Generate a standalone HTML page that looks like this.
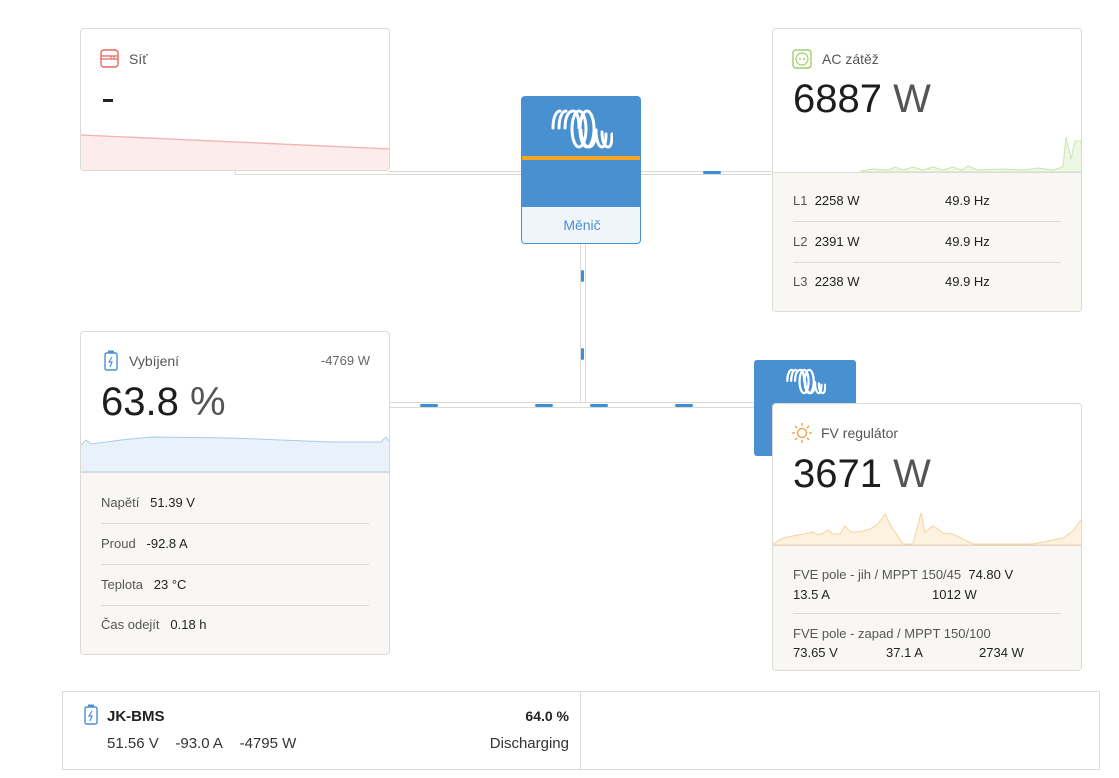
<!DOCTYPE html>
<html><head><meta charset="utf-8"><style>
*{box-sizing:border-box;margin:0;padding:0}
body{width:1119px;height:778px;background:#fff;font-family:"Liberation Sans",sans-serif;color:#222;position:relative;overflow:hidden}
.a{position:absolute}
.card{position:absolute;border:1px solid #dcdad4;border-radius:4px;background:#fff;overflow:hidden}
.beige{position:absolute;left:0;right:0;bottom:0;background:#f8f7f3;border-top:1px solid #dcdad4}
.t{font-size:14px;color:#555}
.big{font-size:40px;color:#1d1d1d}
.big span{color:#555}
.row{position:absolute;left:20px;right:20px;font-size:13px;color:#555}
.row b{font-weight:normal;color:#222}
.line{position:absolute;background:#fff;border:1px solid #dcdad4}
.blue{position:absolute;background:#3a8fd6;border-radius:2px}
</style></head><body>

<div class="line" style="left:235px;top:169px;width:540px;height:6px;border-top:none"></div>
<div class="line" style="left:389px;top:169px;width:383px;height:3px;border:none;border-bottom:1px solid #dcdad4"></div>
<div class="line" style="left:580px;top:243px;width:6px;height:164px;border-left:1px solid #dcdad4;border-right:1px solid #dcdad4;border-top:none;border-bottom:none"></div>
<div class="line" style="left:389px;top:402px;width:384px;height:6px"></div>
<div class="blue" style="left:703px;top:171px;width:18px;height:3px"></div>
<div class="blue" style="left:581px;top:270px;width:3px;height:12px"></div>
<div class="blue" style="left:581px;top:348px;width:3px;height:12px"></div>
<div class="blue" style="left:420px;top:404px;width:18px;height:3px"></div>
<div class="blue" style="left:535px;top:404px;width:18px;height:3px"></div>
<div class="blue" style="left:590px;top:404px;width:18px;height:3px"></div>
<div class="blue" style="left:675px;top:404px;width:18px;height:3px"></div>

<!-- Síť -->
<div class="card" style="left:80px;top:28px;width:310px;height:143px">
 <svg class="a" style="left:19px;top:20px" width="19" height="19" viewBox="0 0 19 19"><rect x="1" y="1" width="17" height="17" rx="3" fill="none" stroke="#e9665a" stroke-width="1.4"/><line x1="1" y1="7" x2="18" y2="7" stroke="#e9665a" stroke-width="1.2"/><line x1="1" y1="10" x2="18" y2="10" stroke="#e9665a" stroke-width="1.2"/><line x1="11" y1="7" x2="11" y2="10" stroke="#e9665a"/><line x1="14" y1="7" x2="14" y2="10" stroke="#e9665a"/></svg>
 <div class="a t" style="left:48px;top:22px">Síť</div>
 <div class="a" style="left:22px;top:70px;width:10px;height:3px;background:#222"></div>
 <svg class="a" style="left:0;top:100px" width="310" height="43"><polygon points="0,6 310,20 310,43 0,43" fill="#fcecec"/><polyline points="0,6 310,20" stroke="#f5b0b0" fill="none" stroke-width="1.3"/></svg>
</div>

<!-- Měnič -->
<div class="a" style="left:521px;top:96px;width:120px;height:148px;border:1px solid #4a90d2;border-radius:4px;overflow:hidden;background:#4890d0">
 <svg class="a" style="left:29px;top:11px" width="62" height="42" viewBox="0 0 62 42"><g fill="none" stroke="#fff" stroke-width="3" stroke-linecap="round"><path d="M2 20 C2 8 6 3 9 3"/><path d="M8 20 C8 8 12 3 15 3"/><path d="M14 20 C14 8 18 3 22 3 C26 3 28 10 28 20"/><ellipse cx="28" cy="21" rx="7" ry="18"/><ellipse cx="36" cy="21" rx="7" ry="18"/><path d="M30 22 C30 32 34 39 38 39 C42 39 45 32 45 22"/><path d="M45 22 C45 33 48 39 51 39 C54 39 55 33 55 26"/><path d="M51 24 C51 34 54 39 57 39 C60 39 61 34 61 26"/></g></svg>
 <div class="a" style="left:0;top:59px;width:120px;height:4px;background:#f7a520"></div>
 <div class="a" style="left:0;top:110px;width:120px;height:38px;background:#f0f5fa;color:#4a90d2;font-size:14px;text-align:center;line-height:36px">Měnič</div>
</div>

<!-- AC zátěž -->
<div class="card" style="left:772px;top:28px;width:310px;height:284px">
 <svg class="a" style="left:19px;top:20px" width="20" height="20"><rect x="1" y="1" width="18" height="18" rx="3" fill="none" stroke="#9bcf6c" stroke-width="1.4"/><circle cx="10" cy="10" r="6" fill="none" stroke="#9bcf6c" stroke-width="1.2"/><circle cx="8" cy="10" r="1" fill="#9bcf6c"/><circle cx="12" cy="10" r="1" fill="#9bcf6c"/></svg>
 <div class="a t" style="left:49px;top:22px">AC zátěž</div>
 <div class="a big" style="left:20px;top:48px">6887 <span>W</span></div>
 <svg class="a" style="left:0;top:100px" width="310" height="43"><polygon points="88,43 88,42 100,40 115,41 122,38 130,41 140,38 150,41 160,38 170,41 180,38 188,41 195,37 205,41 230,40 250,41 265,39 280,41 290,38 293,8 298,30 302,12 308,12 310,43" fill="#eef7e6" stroke="#c9e6ae" stroke-width="1"/></svg>
 <div class="beige" style="top:143px">
  <div class="row" style="top:20px">L1&nbsp; <b>2258 W</b><b class="a" style="left:152px">49.9 Hz</b></div>
  <div class="a" style="left:20px;right:20px;top:48px;border-top:1px solid #dcdad4"></div>
  <div class="row" style="top:61px">L2&nbsp; <b>2391 W</b><b class="a" style="left:152px">49.9 Hz</b></div>
  <div class="a" style="left:20px;right:20px;top:89px;border-top:1px solid #dcdad4"></div>
  <div class="row" style="top:101px">L3&nbsp; <b>2238 W</b><b class="a" style="left:152px">49.9 Hz</b></div>
 </div>
</div>

<!-- Battery -->
<div class="card" style="left:80px;top:331px;width:310px;height:324px">
 <svg class="a" style="left:23px;top:18px" width="14" height="22"><rect x="1" y="3" width="12" height="17" rx="1.5" fill="none" stroke="#4a90d2" stroke-width="1.4"/><rect x="4" y="0.5" width="6" height="2.5" fill="#4a90d2"/><path d="M8 7 L5 12 L8 12 L6 17" stroke="#4a90d2" fill="none" stroke-width="1.2"/></svg>
 <div class="a t" style="left:48px;top:21px">Vybíjení</div>
 <div class="a" style="right:19px;top:21px;font-size:13px;color:#666">-4769 W</div>
 <div class="a big" style="left:20px;top:48px">63.8 <span>%</span></div>
 <svg class="a" style="left:0;top:100px" width="310" height="40"><polyline points="0,13 5,8 10,12 40,8 70,5 150,6 200,8 250,10 290,10 300,10 305,5 310,12 310,40 0,40" fill="#e9f2fb" stroke="#a9cbec" stroke-width="1"/></svg>
 <div class="beige" style="top:140px">
  <div class="row" style="top:22px">Napětí&nbsp;&nbsp; <b>51.39 V</b></div>
  <div class="a" style="left:20px;right:20px;top:50px;border-top:1px solid #dcdad4"></div>
  <div class="row" style="top:63px">Proud&nbsp;&nbsp; <b>-92.8 A</b></div>
  <div class="a" style="left:20px;right:20px;top:91px;border-top:1px solid #dcdad4"></div>
  <div class="row" style="top:104px">Teplota&nbsp;&nbsp; <b>23 °C</b></div>
  <div class="a" style="left:20px;right:20px;top:132px;border-top:1px solid #dcdad4"></div>
  <div class="row" style="top:144px">Čas odejít&nbsp;&nbsp; <b>0.18 h</b></div>
 </div>
</div>

<!-- Solar charger -->
<div class="a" style="left:754px;top:360px;width:102px;height:96px;background:#4890d0;border-radius:3px">
 <svg class="a" style="left:32px;top:8px" width="40" height="27" viewBox="0 0 62 42"><g fill="none" stroke="#fff" stroke-width="3.5" stroke-linecap="round"><path d="M2 20 C2 8 6 3 9 3"/><path d="M8 20 C8 8 12 3 15 3"/><path d="M14 20 C14 8 18 3 22 3 C26 3 28 10 28 20"/><ellipse cx="28" cy="21" rx="7" ry="18"/><ellipse cx="36" cy="21" rx="7" ry="18"/><path d="M30 22 C30 32 34 39 38 39 C42 39 45 32 45 22"/><path d="M45 22 C45 33 48 39 51 39 C54 39 55 33 55 26"/><path d="M51 24 C51 34 54 39 57 39 C60 39 61 34 61 26"/></g></svg>
</div>
<div class="card" style="left:772px;top:403px;width:310px;height:268px">
 <svg class="a" style="left:19px;top:19px" width="20" height="20"><circle cx="10" cy="10" r="4.5" fill="none" stroke="#f59a3c" stroke-width="1.3"/><g stroke="#f59a3c" stroke-width="1.3"><line x1="10" y1="0" x2="10" y2="3"/><line x1="10" y1="17" x2="10" y2="20"/><line x1="0" y1="10" x2="3" y2="10"/><line x1="17" y1="10" x2="20" y2="10"/><line x1="3" y1="3" x2="5" y2="5"/><line x1="15" y1="15" x2="17" y2="17"/><line x1="17" y1="3" x2="15" y2="5"/><line x1="3" y1="17" x2="5" y2="15"/></g></svg>
 <div class="a t" style="left:48px;top:21px">FV regulátor</div>
 <div class="a big" style="left:20px;top:48px">3671 <span>W</span></div>
 <svg class="a" style="left:0;top:100px" width="310" height="41"><polyline points="0,40 10,34 30,30 40,28 45,31 50,29 55,26 60,30 67,30 72,22 78,28 85,28 90,27 97,25 105,20 112,10 118,22 122,28 130,40 140,40 148,9 152,28 160,22 165,25 170,29 180,30 200,40 260,40 290,34 300,27 310,13 310,41 0,41" fill="#fdf1df" stroke="#f8d3a0" stroke-width="1"/></svg>
 <div class="beige" style="top:141px">
  <div class="row" style="top:21px">FVE pole - jih / MPPT 150/45&nbsp; <b>74.80 V</b></div>
  <div class="row" style="top:41px"><b>13.5 A</b><b class="a" style="left:139px">1012 W</b></div>
  <div class="a" style="left:20px;right:20px;top:67px;border-top:1px solid #dcdad4"></div>
  <div class="row" style="top:80px">FVE pole - zapad / MPPT 150/100</div>
  <div class="row" style="top:99px"><b>73.65 V</b><b class="a" style="left:93px">37.1 A</b><b class="a" style="left:186px">2734 W</b></div>
 </div>
</div>

<!-- bottom bar -->
<div class="a" style="left:62px;top:691px;width:1038px;height:79px;border:1px solid #dcdad4"></div>
<div class="a" style="left:580px;top:691px;width:1px;height:79px;background:#dcdad4"></div>
<svg class="a" style="left:84px;top:704px" width="14" height="22"><rect x="1" y="3" width="12" height="17" rx="1.5" fill="none" stroke="#4a90d2" stroke-width="1.4"/><rect x="4" y="0.5" width="6" height="2.5" fill="#4a90d2"/><path d="M8 7 L5 12 L8 12 L6 17" stroke="#4a90d2" fill="none" stroke-width="1.2"/></svg>
<div class="a" style="left:107px;top:708px;font-size:15px;font-weight:bold;color:#222">JK-BMS</div>
<div class="a" style="left:107px;top:735px;font-size:15px;color:#333">51.56 V&nbsp;&nbsp;&nbsp; -93.0 A&nbsp;&nbsp;&nbsp; -4795 W</div>
<div class="a" style="right:550px;top:708px;font-size:14px;font-weight:bold;color:#222">64.0 %</div>
<div class="a" style="right:550px;top:735px;font-size:15px;color:#333">Discharging</div>
</body></html>
